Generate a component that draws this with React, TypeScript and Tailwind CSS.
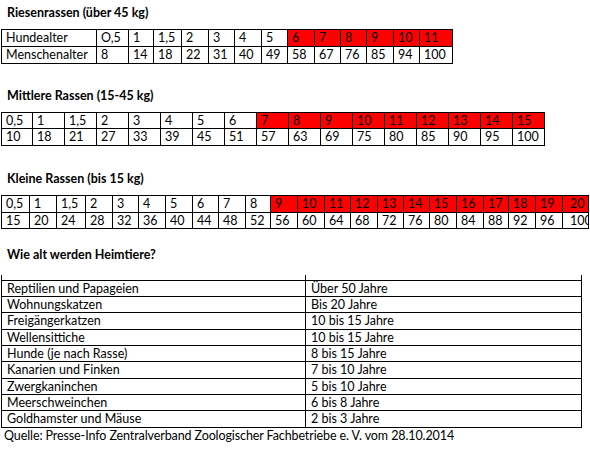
const font = "font-['Lato','Liberation_Sans',sans-serif]";

type Cell = { text: string; w: string; red?: boolean };

const giantTop: Cell[] = [
  { text: "Hundealter", w: "w-[95px]" },
  { text: "O,5", w: "w-[32px]" },
  { text: "1", w: "w-[25px]" },
  { text: "1,5", w: "w-[28px]" },
  { text: "2", w: "w-[27px]" },
  { text: "3", w: "w-[26px]" },
  { text: "4", w: "w-[27px]" },
  { text: "5", w: "w-[26px]" },
  { text: "6", w: "w-[27px]", red: true },
  { text: "7", w: "w-[26px]", red: true },
  { text: "8", w: "w-[26px]", red: true },
  { text: "9", w: "w-[27px]", red: true },
  { text: "10", w: "w-[26px]", red: true },
  { text: "11", w: "w-[33px]", red: true },
];
const giantBottom = ["Menschenalter", "8", "14", "18", "22", "31", "40", "49", "58", "67", "76", "85", "94", "100"];

const midTop = ["0,5", "1", "1,5", "2", "3", "4", "5", "6", "7", "8", "9", "10", "11", "12", "13", "14", "15"];
const midBottom = ["10", "18", "21", "27", "33", "39", "45", "51", "57", "63", "69", "75", "80", "85", "90", "95", "100"];

// last column is cut off at the right edge, like in the screenshot
const smallW = [
  "w-[28px]", "w-[27px]", "w-[29px]", "w-[27px]", "w-[26px]", "w-[27px]", "w-[27px]", "w-[26px]",
  "w-[27px]", "w-[25px]", "w-[27px]", "w-[27px]", "w-[26px]", "w-[27px]", "w-[26px]", "w-[26px]",
  "w-[27px]", "w-[27px]", "w-[25px]", "w-[27px]", "w-[27px]", "w-[26px] pl-[7px]",
];
const smallTop = ["0,5", "1", "1,5", "2", "3", "4", "5", "6", "7", "8", "9", "10", "11", "12", "13", "14", "15", "16", "17", "18", "19", "20"];
const smallBottom = ["15", "20", "24", "28", "32", "36", "40", "44", "48", "52", "56", "60", "64", "68", "72", "76", "80", "84", "88", "92", "96", "100"];

const pets = [
  ["Reptilien und Papageien", "Über 50 Jahre", "h-[16px]"],
  ["Wohnungskatzen", "Bis 20 Jahre", "h-[16px]"],
  ["Freigängerkatzen", "10 bis 15 Jahre", "h-[17px]"],
  ["Wellensittiche", "10 bis 15 Jahre", "h-[16px]"],
  ["Hunde (je nach Rasse)", "8 bis 15 Jahre", "h-[16px]"],
  ["Kanarien und Finken", "7 bis 10 Jahre", "h-[17px]"],
  ["Zwergkaninchen", "5 bis 10 Jahre", "h-[16px]"],
  ["Meerschweinchen", "6 bis 8 Jahre", "h-[16px]"],
  ["Goldhamster und Mäuse", "2 bis 3 Jahre", "h-[17px]"],
];

function Heading({ children, className }: { children: string; className: string }) {
  return (
    <div className={`h-[16px] pl-[7px] text-[12.5px] font-bold leading-[16px] text-black ${className}`}>
      {children}
    </div>
  );
}

function Row({ cells, h }: { cells: Cell[]; h: string }) {
  return (
    <div className="flex">
      {cells.map((c, i) => (
        <div
          key={i}
          className={`pl-[4px] ${c.w} ${h} shrink-0 overflow-hidden whitespace-nowrap border-r border-b border-black leading-[16px] ${
            c.red ? "bg-[#ff0000]" : "bg-white"
          }`}
        >
          {c.text}
        </div>
      ))}
    </div>
  );
}

export default function App() {
  const giantRow2 = giantBottom.map((t, i) => ({ text: t, w: giantTop[i].w }));
  const midRow1 = midTop.map((t, i) => ({ text: t, w: i === 0 ? "w-[31px]" : "w-[32px]", red: i >= 8 }));
  const midRow2 = midBottom.map((t, i) => ({ text: t, w: i === 0 ? "w-[31px]" : "w-[32px]" }));
  const smallRow1 = smallTop.map((t, i) => ({ text: t, w: smallW[i], red: i >= 10 }));
  const smallRow2 = smallBottom.map((t, i) => ({ text: t, w: smallW[i] }));

  return (
    <div className={`h-[457px] w-[590px] overflow-hidden bg-white pt-[5px] text-[12.5px] text-black ${font}`}>
      <Heading className="">Riesenrassen (über 45 kg)</Heading>
      <div className="ml-[1px] mt-[8px] w-max border-t border-l border-black">
        <Row cells={giantTop} h="h-[17px]" />
        <Row cells={giantRow2} h="h-[17px]" />
      </div>

      <Heading className="mt-[24px]">Mittlere Rassen (15-45 kg)</Heading>
      <div className="ml-[1px] mt-[8px] w-max border-t border-l border-black">
        <Row cells={midRow1} h="h-[16px]" />
        <Row cells={midRow2} h="h-[17px]" />
      </div>

      <Heading className="mt-[25px]">Kleine Rassen (bis 15 kg)</Heading>
      <div className="ml-[1px] mt-[8px] w-max border-t border-l border-black">
        <Row cells={smallRow1} h="h-[17px]" />
        <Row cells={smallRow2} h="h-[16px]" />
      </div>

      <Heading className="mt-[18px]">Wie alt werden Heimtiere?</Heading>
      <div className="ml-[1px] mt-[12px] w-[581px]">
        <div className="flex h-[5px] border-l border-black">
          <div className="w-[304px] border-r border-black" />
          <div className="w-[276px] border-r border-black" />
        </div>
        <div className="border-t border-l border-black">
          {pets.map(([animal, age, h]) => (
            <div key={animal} className={`flex ${h}`}>
              <div className="w-[304px] border-r border-b border-black pl-[5px] leading-[15px]">{animal}</div>
              <div className="w-[276px] border-r border-b border-black pl-[5px] leading-[15px]">{age}</div>
            </div>
          ))}
        </div>
      </div>
      <div className="pl-[4px] leading-[16px] tracking-[-0.1px]">
        Quelle: Presse-Info Zentralverband Zoologischer Fachbetriebe e. V. vom 28.10.2014
      </div>
    </div>
  );
}
